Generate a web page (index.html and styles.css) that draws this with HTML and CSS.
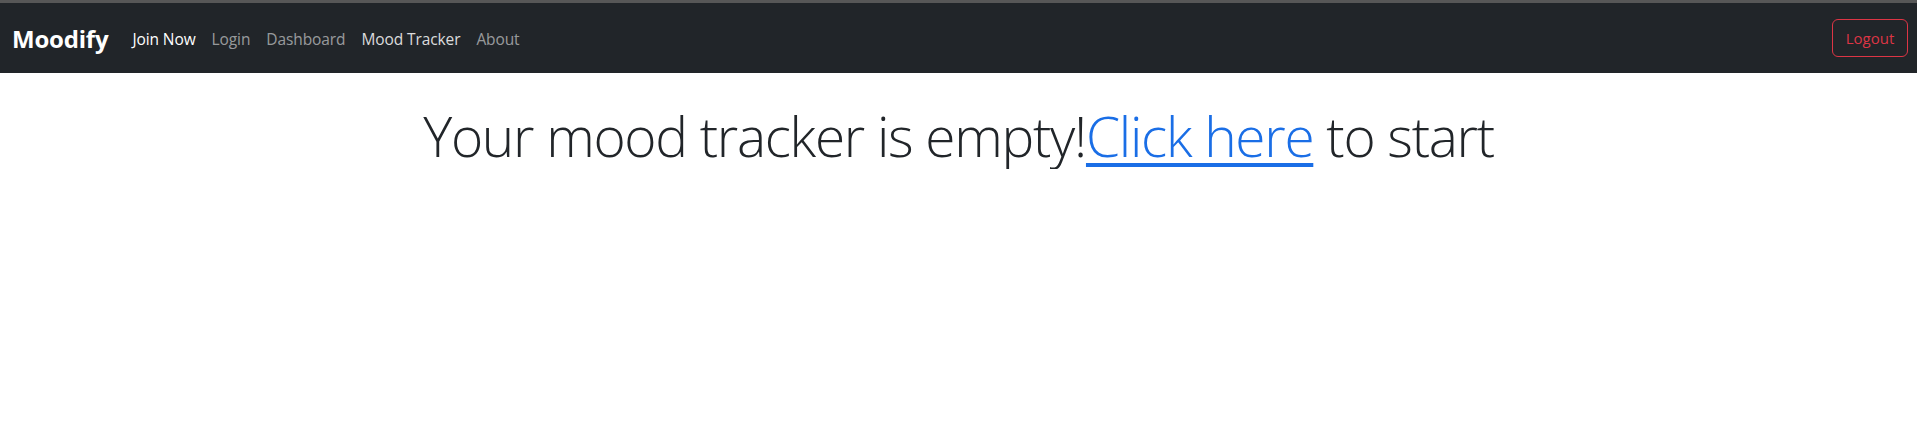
FILE: index.html
```html
<!DOCTYPE html>
<html lang="en">
<head>
<meta charset="utf-8">
<title>Moodify</title>
<link rel="stylesheet" href="styles.css">
</head>
<body>
<div class="topstrip"></div>
<nav class="navbar">
  <a class="brand" href="#">Moodify</a>
  <ul class="nav">
    <li><a class="nav-link bright" href="#">Join Now</a></li>
    <li><a class="nav-link" href="#">Login</a></li>
    <li><a class="nav-link" href="#">Dashboard</a></li>
    <li><a class="nav-link active" href="#">Mood Tracker</a></li>
    <li><a class="nav-link" href="#">About</a></li>
  </ul>
  <button class="btn-logout">Logout</button>
</nav>
<main class="content">
  <h1 class="display">Your mood tracker is empty!<a class="link" href="#">Click here</a> to start</h1>
</main>
</body>
</html>
```
FILE: styles.css
```css
* { box-sizing: border-box; }
html, body { margin: 0; padding: 0; background: #fff; }
body { font-family: "Open Sans", "Noto Sans", sans-serif; color: #212529; }
.topstrip { height: 3px; background: #575757; }
.navbar {
  height: 70px;
  background: #212529;
  display: flex;
  align-items: center;
  padding: 0 9px 0 12px;
}
.brand {
  color: #fff;
  text-decoration: none;
  font-weight: 700;
  font-size: 24px;
  margin-right: 16px;
  letter-spacing: -0.2px;
}
.nav { list-style: none; margin: 0; padding: 0; display: flex; flex: 1; margin-top: 2px; }
.nav-link {
  display: block;
  padding: 8px 8px;
  font-size: 15.5px;
  color: rgba(255,255,255,0.55);
  text-decoration: none;
  letter-spacing: -0.1px;
}
.nav-link.bright { color: #fff; }
.nav-link.active { color: rgba(255,255,255,0.85); }
.btn-logout {
  font-family: inherit;
  font-size: 15px;
  color: #dc3545;
  background: transparent;
  border: 1px solid #dc3545;
  border-radius: 6px;
  height: 38px;
  width: 76px;
  padding: 0;
}
.content { text-align: center; }
.display {
  margin: 0;
  padding-top: 30px;
  font-size: 55px;
  font-weight: 300;
  line-height: 1.2;
  letter-spacing: -1.3px;
}
.link { color: #1a6ee6; text-decoration: underline; text-decoration-thickness: 4px; text-underline-offset: 6px; }
```
